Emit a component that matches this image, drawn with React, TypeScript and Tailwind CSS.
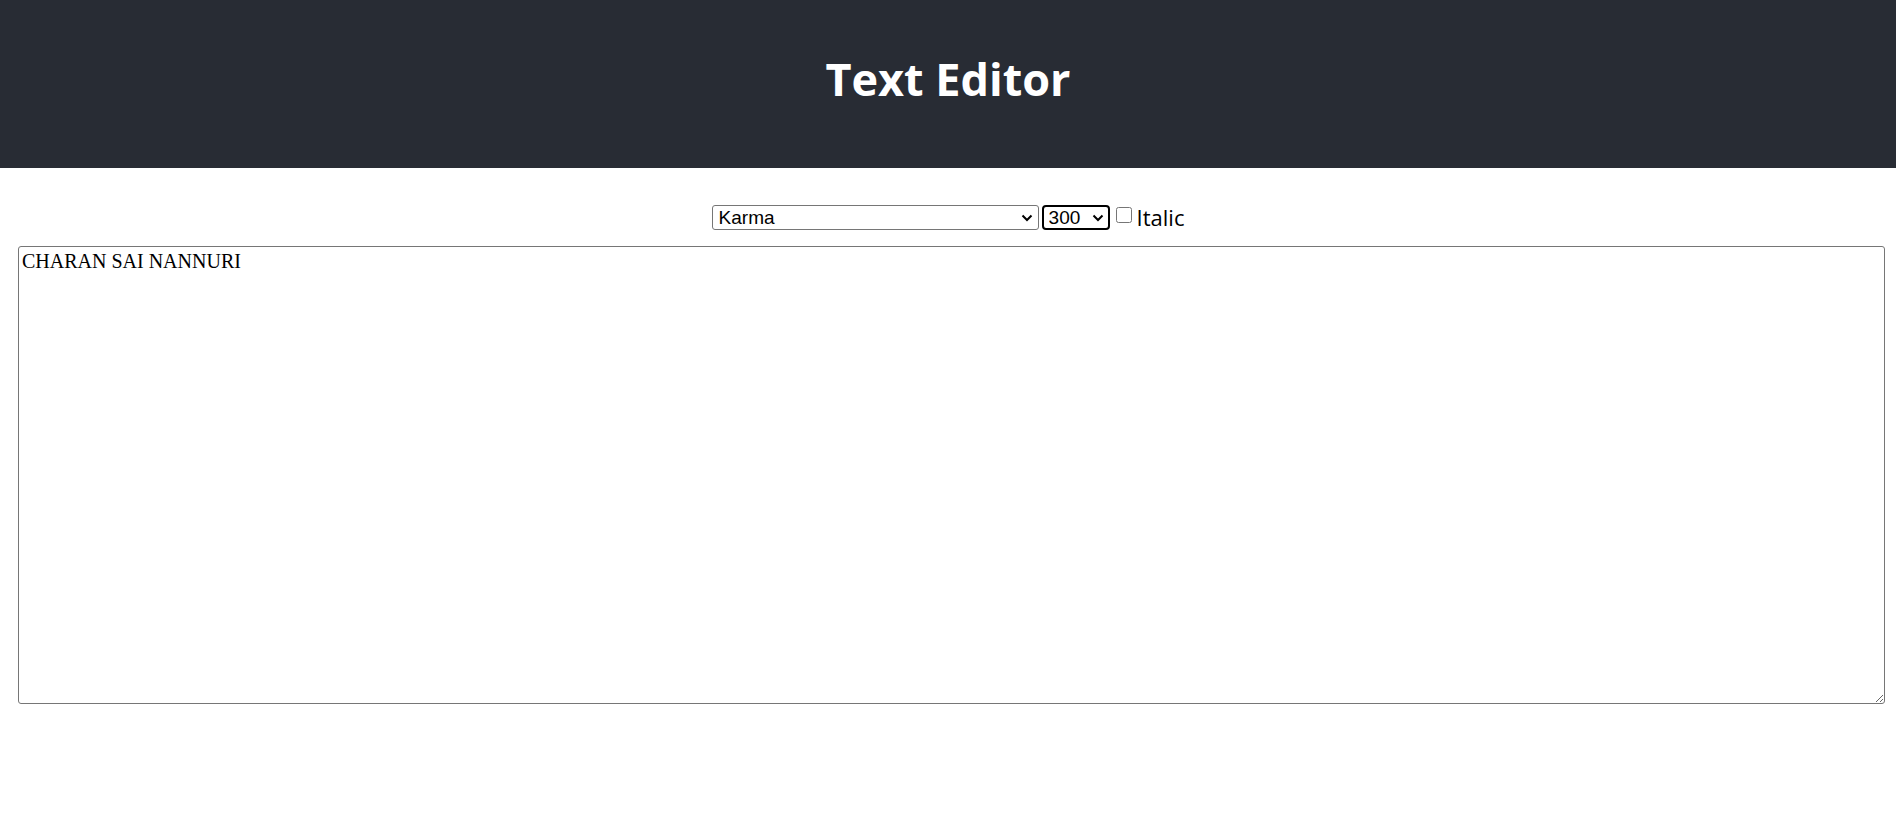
import { useState } from 'react'

const FONTS = ['Karma', 'Roboto', 'Lato', 'Open Sans', 'Inter']
const WEIGHTS = ['100', '200', '300', '400', '500', '600', '700', '800', '900']

function Chevron() {
  return (
    <svg
      width="12"
      height="8"
      viewBox="0 0 12 8"
      className="absolute right-[6px] top-1/2 -translate-y-1/2 pointer-events-none"
    >
      <path d="M1.5 1.5 L6 6 L10.5 1.5" fill="none" stroke="#000" strokeWidth="2" />
    </svg>
  )
}

export default function App() {
  const [font, setFont] = useState('Karma')
  const [weight, setWeight] = useState('300')
  const [italic, setItalic] = useState(false)
  const [text, setText] = useState('CHARAN SAI NANNURI')

  return (
    <div className="min-h-screen bg-white">
      <header className="h-[168px] bg-[#282c34] flex items-center justify-center">
        <h1 className="text-white font-bold text-[45px] leading-none -mt-[12px] [font-family:'Open_Sans',sans-serif]">
          Text Editor
        </h1>
      </header>

      <div className="flex items-center justify-center gap-[3px] mt-[37px] h-[25px]">
        <div className="relative">
          <select
            value={font}
            onChange={(e) => setFont(e.target.value)}
            className="appearance-none block w-[327px] h-[25px] border border-[#767676] rounded-[3px] text-[19px] leading-none text-black bg-white pl-[6px] [font-family:'Liberation_Sans',Arial,sans-serif]"
          >
            {FONTS.map((f) => (
              <option key={f}>{f}</option>
            ))}
          </select>
          <Chevron />
        </div>
        <div className="relative">
          <select
            value={weight}
            onChange={(e) => setWeight(e.target.value)}
            className="appearance-none block w-[68px] h-[25px] border-2 border-black rounded-[4px] text-[19px] leading-none text-black bg-white pl-[5px] [font-family:'Liberation_Sans',Arial,sans-serif]"
          >
            {WEIGHTS.map((w) => (
              <option key={w}>{w}</option>
            ))}
          </select>
          <Chevron />
        </div>
        <label className="flex items-center gap-[5px] ml-[3px] text-[22px] text-black [font-family:'Open_Sans',sans-serif]">
          <input
            type="checkbox"
            checked={italic}
            onChange={(e) => setItalic(e.target.checked)}
            className="w-4 h-4 -mt-[6px]"
          />
          Italic
        </label>
      </div>

      <textarea
        value={text}
        onChange={(e) => setText(e.target.value)}
        className="block ml-[18px] mt-[16px] w-[1867px] h-[458px] border border-[#767676] rounded-[3px] px-[3px] py-[2px] text-[20px] leading-tight text-black [font-family:'Liberation_Serif','Times_New_Roman',serif]"
      />
    </div>
  )
}
